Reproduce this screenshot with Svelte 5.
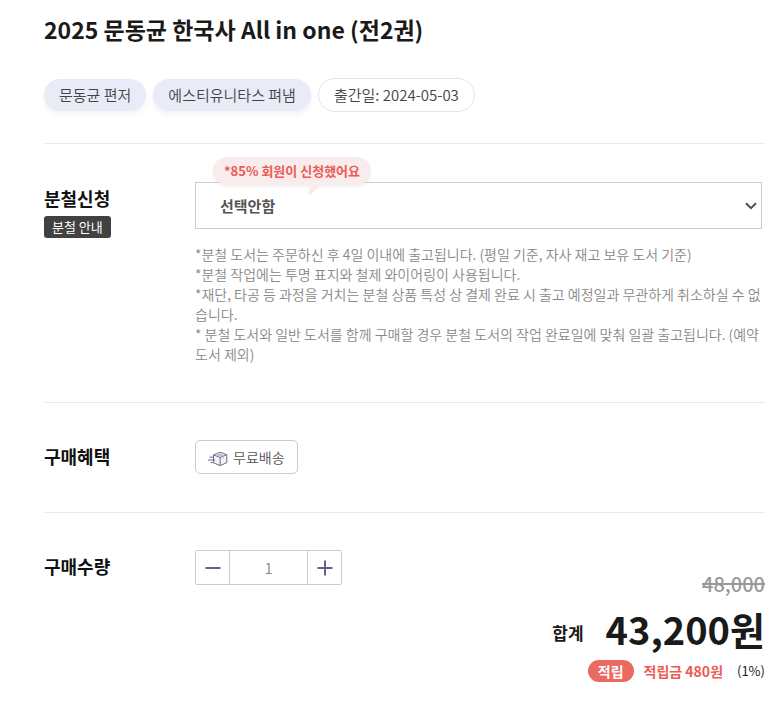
<script lang="ts">
	const unitPrice = 43200;
	const listPrice = 48000;
	const unitPoint = 480;

	const notes = [
		'*분철 도서는 주문하신 후 4일 이내에 출고됩니다. (평일 기준, 자사 재고 보유 도서 기준)',
		'*분철 작업에는 투명 표지와 철제 와이어링이 사용됩니다.',
		'*재단, 타공 등 과정을 거치는 분철 상품 특성 상 결제 완료 시 출고 예정일과 무관하게 취소하실 수 없습니다.',
		'* 분철 도서와 일반 도서를 함께 구매할 경우 분철 도서의 작업 완료일에 맞춰 일괄 출고됩니다. (예약도서 제외)'
	];

	let binding = $state('none');
	let quantity = $state(1);

	let count = $derived(Math.max(1, Number(quantity) || 1));
	let total = $derived((unitPrice * count).toLocaleString('en-US'));
	let original = $derived((listPrice * count).toLocaleString('en-US'));
	let point = $derived((unitPoint * count).toLocaleString('en-US'));
</script>

<main class="product">
	<h1 class="title">2025 문동균 한국사 All in one (전2권)</h1>

	<ul class="chips">
		<li class="chip">문동균 편저</li>
		<li class="chip">에스티유니타스 펴냄</li>
		<li class="chip outline">출간일: 2024-05-03</li>
	</ul>

	<section class="row binding">
		<div class="head">
			<label class="label" for="binding">분철신청</label>
			<button type="button" class="guide">분철 안내</button>
		</div>
		<div class="body">
			<div class="select-wrap">
				<span class="bubble">*85% 회원이 신청했어요</span>
				<select id="binding" class="select" bind:value={binding}>
					<option value="none">선택안함</option>
					<option value="split">분철신청</option>
				</select>
				<svg class="chevron" viewBox="0 0 12 8" width="12" height="8" aria-hidden="true">
					<path d="M1 1.2 6 6.2 11 1.2" />
				</svg>
			</div>
			<div class="notes">
				{#each notes as note}
					<p>{note}</p>
				{/each}
			</div>
		</div>
	</section>

	<section class="row benefit">
		<h2 class="label">구매혜택</h2>
		<div class="body">
			<span class="shipping">
				<svg class="box" viewBox="0 0 20 16" width="20" height="16" aria-hidden="true">
					<path class="face" d="M5.5 4 12 1.3 18.8 3.6V11.6L12.2 14.6 5.5 11.8Z" />
					<path d="M5.5 4 12.2 6.4 18.8 3.6M12.2 6.4V14.6" />
					<path class="tape" d="M8.6 2.7 15.4 5.1V7.6M15.3 2.5 8.8 5.1" />
					<path d="M1.5 6.2H5.5M0 9H7.2M2.5 11.6H5.5" />
				</svg>
				무료배송
			</span>
		</div>
	</section>

	<section class="row amount">
		<label class="label" for="quantity">구매수량</label>
		<div class="body">
			<div class="stepper">
				<button type="button" aria-label="수량 감소" onclick={() => (quantity = Math.max(1, count - 1))}>
					<svg viewBox="0 0 16 16" width="16" height="16" aria-hidden="true">
						<path d="M0.5 8H15.5" />
					</svg>
				</button>
				<input id="quantity" type="text" inputmode="numeric" bind:value={quantity} />
				<button type="button" aria-label="수량 증가" onclick={() => (quantity = count + 1)}>
					<svg viewBox="0 0 16 16" width="16" height="16" aria-hidden="true">
						<path d="M0.5 8H15.5M8 0.5V15.5" />
					</svg>
				</button>
			</div>
		</div>
	</section>

	<section class="summary">
		<del class="original">{original}</del>
		<div class="total">
			<span class="total-label">합계</span>
			<strong class="price">{total}원</strong>
		</div>
		<div class="reward">
			<span class="badge">적립</span>
			<strong class="point">적립금 {point}원</strong>
			<span class="rate">(1%)</span>
		</div>
	</section>
</main>

<style>
	:global(body) {
		background: #fff;
	}

	.product {
		padding: 11px 15px 16px 44px;
		font-family: 'Noto Sans CJK KR', 'Noto Sans', sans-serif;
		color: #1a1a1a;
	}

	.product * {
		box-sizing: border-box;
	}

	.title {
		margin: 0;
		font-size: 23px;
		line-height: 36px;
		font-weight: 700;
	}

	.chips {
		display: flex;
		flex-wrap: wrap;
		align-items: center;
		gap: 7px;
		margin: 0;
		padding: 31px 0;
		list-style: none;
	}

	.chip {
		padding: 4px 15px;
		border-radius: 17px;
		background: #e9ecf7;
		box-shadow: 0 3px 6px rgba(0, 0, 0, 0.05);
		font-size: 15px;
		line-height: 24px;
		font-weight: 350;
		color: #444;
	}

	.chip.outline {
		border: 1px solid #e3e5f0;
		background: #fff;
		box-shadow: none;
	}

	.row {
		display: grid;
		grid-template-columns: 151px minmax(0, 1fr);
		align-items: start;
		border-top: 1px solid #e8e8e8;
	}

	.binding {
		padding: 38px 0;
	}

	.head {
		display: flex;
		flex-direction: column;
		align-items: flex-start;
		gap: 4px;
		padding-top: 2px;
	}

	.label {
		margin: 0;
		font-size: 18px;
		line-height: 28px;
		font-weight: 700;
		color: #111;
	}

	.guide {
		height: 22px;
		padding: 0 8px;
		border: 0;
		border-radius: 3px;
		background: #414141;
		font-family: inherit;
		font-size: 13px;
		line-height: 22px;
		font-weight: 400;
		color: #fff;
		cursor: pointer;
	}

	.select-wrap {
		position: relative;
		margin-right: 3px;
	}

	.select {
		display: block;
		width: 100%;
		height: 47px;
		padding: 0 24px;
		appearance: none;
		border: 1px solid #ccc;
		border-radius: 0;
		background: #fff;
		font-family: inherit;
		font-size: 15px;
		font-weight: 700;
		color: #555;
	}

	.chevron {
		position: absolute;
		top: 20px;
		right: 5px;
		fill: none;
		stroke: #505050;
		stroke-width: 2;
		pointer-events: none;
	}

	.bubble {
		position: absolute;
		top: -25px;
		left: 18px;
		padding: 0 11px;
		border-radius: 14px;
		background: #f9ecec;
		box-shadow: 0 2px 3px rgba(0, 0, 0, 0.06);
		font-size: 13px;
		line-height: 28px;
		font-weight: 700;
		white-space: nowrap;
		color: #ec5b54;
	}

	.bubble::after {
		content: '';
		position: absolute;
		top: 100%;
		left: 96px;
		border-top: 11px solid #f9ecec;
		border-right: 12px solid transparent;
	}

	.notes {
		padding-top: 15px;
		font-size: 14px;
		line-height: 20px;
		font-weight: 350;
		color: #888;
		word-break: break-all;
	}

	.notes p {
		margin: 0;
	}

	.benefit {
		padding: 37px 0 38px;
	}

	.benefit .label,
	.amount .label {
		padding-top: 2px;
	}

	.shipping {
		display: inline-flex;
		align-items: center;
		gap: 5px;
		height: 34px;
		padding: 0 12px;
		border: 1px solid #ccc;
		border-radius: 5px;
		font-size: 14px;
		font-weight: 350;
		color: #555;
	}

	.box {
		margin-top: 4px;
		fill: none;
		stroke: #6b6b8e;
		stroke-width: 1;
	}

	.box .face {
		fill: #f4f4f8;
	}

	.box .tape {
		stroke: #b4b4c8;
	}

	.amount {
		padding-top: 37px;
	}

	.stepper {
		display: inline-flex;
		height: 35px;
		border: 1px solid #ccc;
		border-radius: 2px;
	}

	.stepper button {
		display: flex;
		align-items: center;
		justify-content: center;
		width: 33px;
		padding: 0;
		border: 0;
		background: #fff;
		cursor: pointer;
	}

	.stepper svg {
		stroke: #62628a;
		stroke-width: 2;
	}

	.stepper input {
		width: 79px;
		padding: 0;
		border: 1px solid #ccc;
		border-width: 0 1px;
		background: #fff;
		font-family: inherit;
		font-size: 15px;
		font-weight: 350;
		text-align: center;
		color: #888;
	}

	.summary {
		display: flex;
		flex-direction: column;
		align-items: flex-end;
		margin-top: -15px;
	}

	.original {
		font-size: 20px;
		line-height: 28px;
		font-weight: 500;
		color: #999;
	}

	.total {
		display: flex;
		align-items: center;
		gap: 22px;
	}

	.total-label {
		padding-top: 8px;
		font-size: 17px;
		line-height: 24px;
		font-weight: 700;
	}

	.price {
		font-size: 38px;
		line-height: 62px;
	}

	.reward {
		display: flex;
		align-items: center;
		font-size: 14px;
		line-height: 22px;
	}

	.badge {
		padding: 0 10px;
		border-radius: 11px;
		background: #ea6a62;
		font-weight: 700;
		color: #fff;
	}

	.point {
		margin-left: 10px;
		color: #ec5b54;
	}

	.rate {
		margin-left: 14px;
		font-size: 13px;
	}
</style>
